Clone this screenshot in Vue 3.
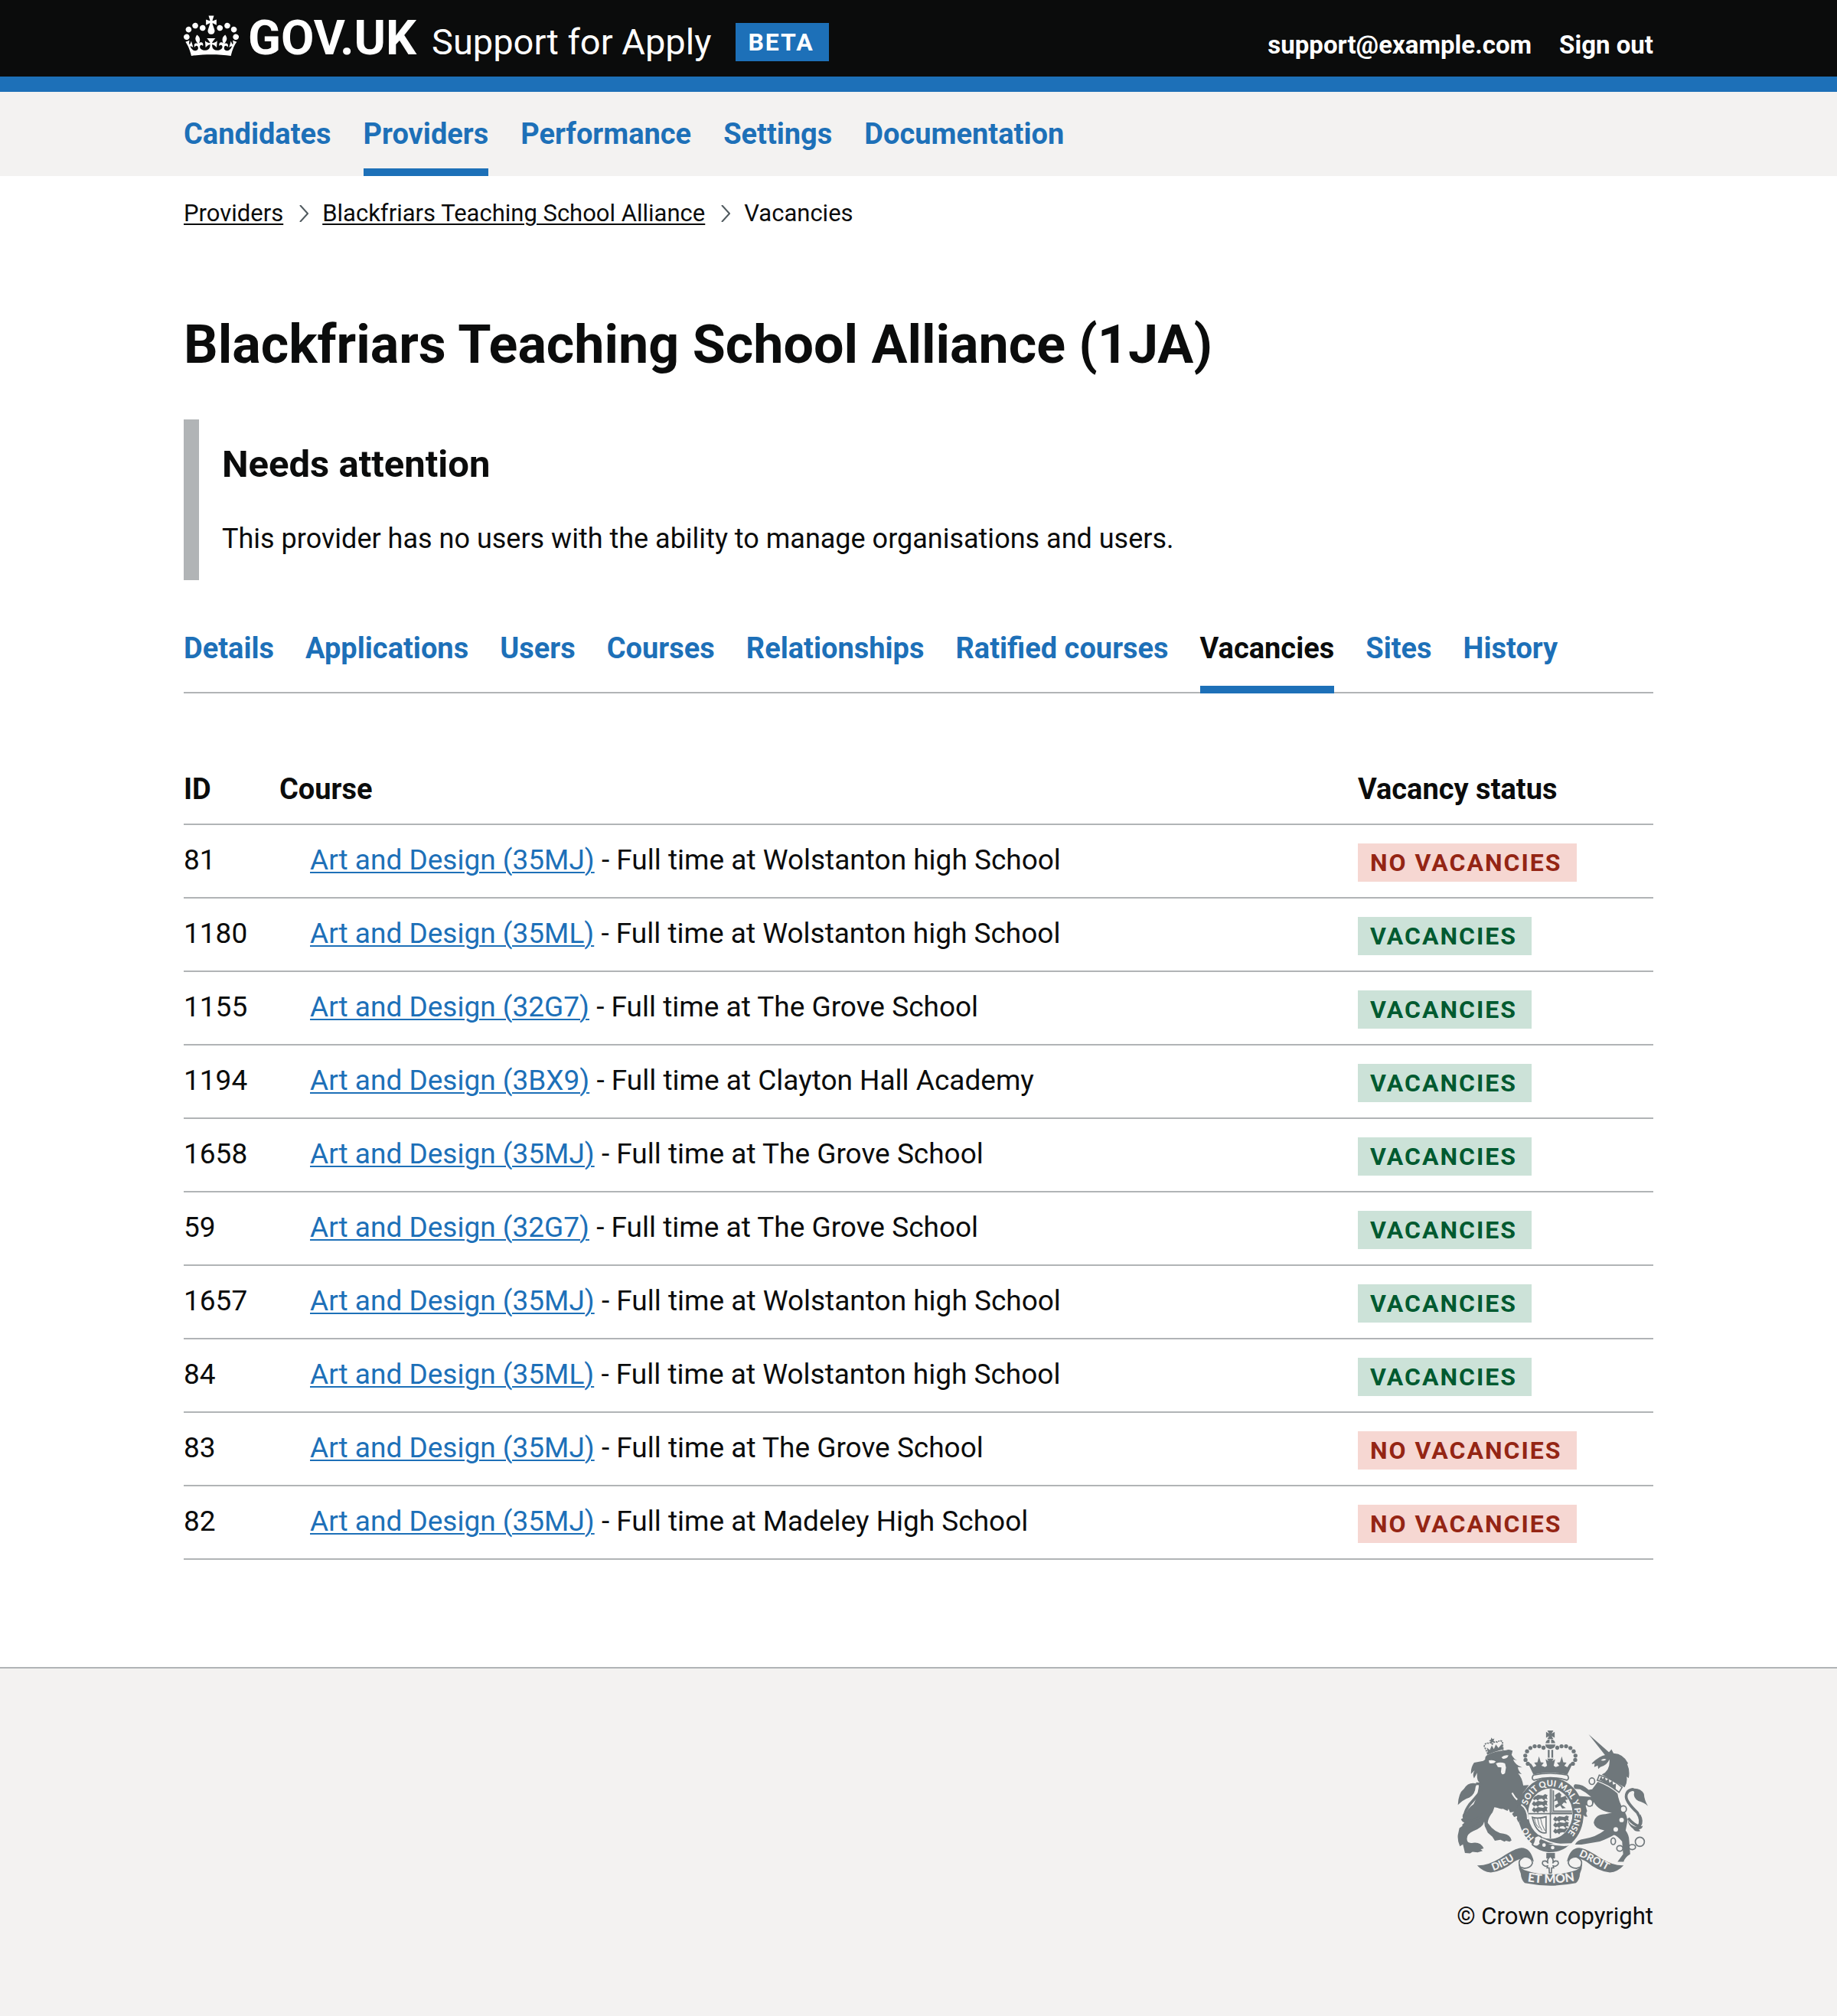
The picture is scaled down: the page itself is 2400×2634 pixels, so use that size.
<script setup>
const primaryNav = [
  { text: 'Candidates' },
  { text: 'Providers', current: true },
  { text: 'Performance' },
  { text: 'Settings' },
  { text: 'Documentation' }
]

const tabs = [
  { text: 'Details' },
  { text: 'Applications' },
  { text: 'Users' },
  { text: 'Courses' },
  { text: 'Relationships' },
  { text: 'Ratified courses' },
  { text: 'Vacancies', current: true },
  { text: 'Sites' },
  { text: 'History' }
]

const rows = [
  { id: 81, code: '35MJ', site: 'Wolstanton high School', open: false },
  { id: 1180, code: '35ML', site: 'Wolstanton high School', open: true },
  { id: 1155, code: '32G7', site: 'The Grove School', open: true },
  { id: 1194, code: '3BX9', site: 'Clayton Hall Academy', open: true },
  { id: 1658, code: '35MJ', site: 'The Grove School', open: true },
  { id: 59, code: '32G7', site: 'The Grove School', open: true },
  { id: 1657, code: '35MJ', site: 'Wolstanton high School', open: true },
  { id: 84, code: '35ML', site: 'Wolstanton high School', open: true },
  { id: 83, code: '35MJ', site: 'The Grove School', open: false },
  { id: 82, code: '35MJ', site: 'Madeley High School', open: false }
]

// Pearls along the left arch of the crown; the right arch mirrors them.
const pearls = [[410, 128], [393, 122], [375, 122], [358, 129], [345, 142], [338, 159], [339, 176], [348, 191]]

// Links of the unicorn's chain: centre, radii.
const chain = [[601, 260, 11, 13], [592, 345, 12, 14], [725, 370, 12, 13], [685, 497, 9, 13], [711, 525, 12, 11], [760, 520, 13, 10], [790, 499, 18, 18]]

// Lions passant: three to a quarter.
const passant = [[364, 326], [364, 350], [364, 374], [448, 410], [448, 434], [448, 458]]
</script>

<template>
  <div class="page">
    <header class="header">
      <div class="container header-inner">
        <a class="brand" href="#">
          <svg class="crown" viewBox="0 0 132 97" aria-hidden="true">
            <path d="M25 30.2c3.5 1.5 7.7-.2 9.1-3.7 1.5-3.6-.2-7.8-3.9-9.2-3.6-1.4-7.6.3-9.1 3.9-1.4 3.5.3 7.5 3.9 9zM9 39.5c3.6 1.5 7.8-.2 9.2-3.7 1.5-3.6-.2-7.8-3.9-9.1-3.6-1.5-7.6.2-9.1 3.8-1.4 3.5.3 7.5 3.8 9zM4.4 57.2c3.5 1.5 7.7-.2 9.1-3.8 1.5-3.6-.2-7.7-3.9-9.1-3.5-1.5-7.6.3-9.1 3.8-1.4 3.5.3 7.6 3.9 9.1zm38.3-21.4c3.5 1.5 7.7-.2 9.1-3.8 1.5-3.6-.2-7.7-3.9-9.1-3.6-1.5-7.6.3-9.1 3.8-1.3 3.6.4 7.7 3.9 9.1zm64.4-5.6c-3.6 1.5-7.8-.2-9.1-3.7-1.5-3.6.2-7.8 3.8-9.2 3.6-1.4 7.7.3 9.2 3.9 1.3 3.5-.4 7.5-3.9 9zm15.9 9.3c-3.6 1.5-7.7-.2-9.1-3.7-1.5-3.6.2-7.8 3.7-9.1 3.6-1.5 7.7.2 9.2 3.8 1.5 3.5-.3 7.5-3.8 9zm4.7 17.7c-3.6 1.5-7.8-.2-9.2-3.8-1.5-3.6.2-7.7 3.9-9.1 3.6-1.5 7.7.3 9.2 3.8 1.3 3.5-.4 7.6-3.9 9.1zM89.3 35.8c-3.6 1.5-7.8-.2-9.2-3.8-1.4-3.6.2-7.7 3.9-9.1 3.6-1.5 7.7.3 9.2 3.8 1.4 3.6-.3 7.7-3.9 9.1zM69.7 17.7l8.9 4.7V9.3l-8.9 2.8c-.2-.3-.5-.6-.9-.9L72.4 0H59.6l3.5 11.2c-.3.3-.6.5-.9.9l-8.8-2.8v13.1l8.8-4.7c.3.3.6.7.9.9l-5 15.4v.1c-.2.8-.4 1.6-.4 2.4 0 4.1 3.1 7.5 7 8.1h.2c.3 0 .7.1 1 .1.4 0 .7 0 1-.1h.2c4-.6 7.1-4.1 7.1-8.1 0-.8-.1-1.7-.4-2.4V34l-5.1-15.4c.4-.2.7-.6 1-.9zM66 92.8c16.9 0 32.8 1.1 47.1 3.2 4-16.9 8.9-26.7 14-33.5l-9.6-3.4c1 4.9 1.1 7.2 0 10.2-1.5-1.4-3-4.3-4.2-8.7L108.6 76c2.8-2 5-3.2 7.5-3.3-4.4 9.4-10 11.9-13.6 11.2-4.3-.8-6.3-4.6-5.6-7.9 1-4.7 5.7-5.9 8-.5 4.3-8.7-3-11.4-7.6-8.8 7.1-7.2 7.9-13.5 2.1-21.1-8 6.1-8.1 12.3-4.5 20.8-4.7-5.4-12.1-2.5-9.5 6.2 3.4-5.2 7.9-2 7.2 3.1-.6 4.3-6.4 7.8-13.5 7.2-10.3-.9-10.9-8-11.2-13.8 2.5-.5 7.1 1.8 11 7.3L80.2 60c-4.1 4.4-8 5.3-12.3 5.4 1.4-4.4 8-11.6 8-11.6H55.5s6.4 7.2 7.9 11.6c-4.2-.1-8-1-12.3-5.4l1.4 16.4c3.9-5.5 8.5-7.7 10.9-7.3-.3 5.8-.9 12.8-11.1 13.8-7.2.6-12.9-2.9-13.5-7.2-.7-5 3.8-8.3 7.1-3.1 2.7-8.7-4.6-11.6-9.4-6.2 3.7-8.5 3.6-14.7-4.6-20.8-5.8 7.6-5 13.9 2.2 21.1-4.7-2.6-11.9.1-7.7 8.8 2.3-5.5 7.1-4.2 8.1.5.7 3.3-1.3 7.1-5.7 7.9-3.5.7-9-1.8-13.5-11.2 2.5.1 4.7 1.3 7.5 3.3l-4.7-15.4c-1.2 4.4-2.7 7.2-4.3 8.7-1.1-3-.9-5.3 0-10.2l-9.5 3.4c5 6.9 9.9 16.7 14 33.5 14.8-2.1 30.8-3.2 47.7-3.2z" />
          </svg>
          <span class="logotype">GOV.UK</span>
          <span class="product">Support for Apply</span>
        </a>
        <strong class="tag tag-beta">BETA</strong>
        <nav class="account" aria-label="Account">
          <a href="#">support@example.com</a>
          <a href="#">Sign out</a>
        </nav>
      </div>
    </header>

    <nav class="primary" aria-label="Primary">
      <div class="container nav-list">
        <a
          v-for="item in primaryNav"
          :key="item.text"
          href="#"
          class="nav-link"
          :class="{ current: item.current }"
        >{{ item.text }}</a>
      </div>
    </nav>

    <div class="container">
      <nav aria-label="Breadcrumb">
        <ol class="breadcrumbs">
          <li><a href="#">Providers</a></li>
          <li>
            <svg class="chevron" viewBox="0 0 12 22" aria-hidden="true"><path d="M1 0l10 11-10 11" /></svg>
            <a href="#">Blackfriars Teaching School Alliance</a>
          </li>
          <li>
            <svg class="chevron" viewBox="0 0 12 22" aria-hidden="true"><path d="M1 0l10 11-10 11" /></svg>
            Vacancies
          </li>
        </ol>
      </nav>

      <main>
        <h1>Blackfriars Teaching School Alliance (1JA)</h1>

        <section class="inset">
          <h2>Needs attention</h2>
          <p>This provider has no users with the ability to manage organisations and users.</p>
        </section>

        <nav class="tabs nav-list" aria-label="Provider">
          <a
            v-for="tab in tabs"
            :key="tab.text"
            href="#"
            class="nav-link"
            :class="{ current: tab.current }"
          >{{ tab.text }}</a>
        </nav>

        <table>
          <thead>
            <tr>
              <th scope="col" class="col-id">ID</th>
              <th scope="col">Course</th>
              <th scope="col" class="col-status">Vacancy status</th>
            </tr>
          </thead>
          <tbody>
            <tr v-for="row in rows" :key="row.id">
              <td>{{ row.id }}</td>
              <td class="course"><a href="#">Art and Design ({{ row.code }})</a> - Full time at {{ row.site }}</td>
              <td class="status">
                <strong class="tag" :class="row.open ? 'tag-green' : 'tag-red'">{{ row.open ? 'VACANCIES' : 'NO VACANCIES' }}</strong>
              </td>
            </tr>
          </tbody>
        </table>
      </main>
    </div>

    <footer class="footer">
      <div class="container footer-inner">
        <a class="copyright" href="#">
          <svg class="arms" viewBox="70 58 755 614" aria-hidden="true">
            <defs>
              <path id="garter-path" d="M346 355A96 108 0 0 1 437 280A96 108 0 0 1 533 388A96 108 0 0 1 462 493" />
              <path id="garter-start" d="M374 484Q346 458 338 420" />
              <path id="motto-left" d="M212 613Q262 596 326 550" />
              <path id="motto-right" d="M549 555Q600 578 684 624" />
              <path id="motto-mid" d="M330 653Q437 672 550 650" />
              <clipPath id="shield"><ellipse cx="437" cy="388" rx="86" ry="98" /></clipPath>
            </defs>

            <!-- Royal crown -->
            <g>
              <path d="M425 60h24l-7 12 12-7v24l-12-7 7 12h-24l7-12-12 7V65l12 7z" />
              <path d="M418 110q2-14 16-15v15zM440 95q14 1 16 15h-16zM417 115h40q-2 16-20 18-18-2-20-18z" />
              <path d="M427 136h7v31h-7zM441 136h7v31h-7z" />
              <circle v-for="p in pearls" :key="'l' + p[0]" :cx="p[0]" :cy="p[1]" r="8" />
              <circle v-for="p in pearls" :key="'r' + p[0]" :cx="874 - p[0]" :cy="p[1]" r="8" />
              <path d="M346 183l16 9 8 13 12-6-9-12 13-2 6-23 7 23 12 2-9 12 14 5 8-5-6-26 12 8-6-10h26l-6 10 12-8-6 26 8 5 14-5-9-12 12-2 7-23 6 23 13 2-9 12 12 6 8-13 16-9-24 51q-67-16-134 0z" />
              <path class="line" d="M370 236q67-14 134 0 10 14-2 20-65-20-130 0-12-6-2-20z" />
            </g>

            <!-- Lion -->
            <g>
              <path class="line" d="M190 152l-14-30q4-14 16-12 8-6 16 4 10-14 20-8 10-10 20-2l2 34" stroke-dasharray="7 3" />
              <path d="M190 145l-4-18 12 10 8-18 8 14 8-18 10 14 14-16 4 18-58 20zM204 88l5 6 7-2-3 8 4 7-9-1-5 7-2-9-6-4 7-4zM187 150q32-14 65-22v6q-34 8-64 22z" />
              <path d="M172 180l8-6q-2-10 6-16 32-18 76-20 12-6 26 2l-4 16q10 18 22 22l-16-4q8 22 36 32l-18-2q4 18 16 28l-14-3q16 18 20 48l22-2-14 20q-22 24-20 46 26 12 34 34l2 36-18 10-8 6-10-10-8 4-6-14 4-10-14 4-8-12 8-8-16 2-6-14-4 8q-12-4-18-8-10 2-22-4-8-2-12-2-2 6-4 12-2 8-8 14-14 20-14 36 28 40 62 42 26 4 32 26l-8 6-14-4-6 4-16-8-22 4-10-16-18-16-12-26-2-18q-4 22-44 38-26 12-24 32 0 18 24 14 30-4 42 22l-12 4 8 6-20 6-20-2-10 6-20-2-8-34-12 8q-10-20-8-44l6-28q26-14 24-48 4-28 32-46 20-40 22-88-10-6-8-36l-12 22q-8-16 2-32l-14 14q-2-24 12-44z" />
              <path class="bg" d="M194 178q18-4 28 4-10 12-26 6zM244 166q12-12 28-8-6 14-22 14zM222 190q18-8 36 0l4 16-4 22q-12 12-16-4l2-18-14-2z" />
              <path class="bg-line" d="M286 306q10 20 26 32" />
              <path class="tail" d="M178 384q-46 46-72 30-18-20 12-62 34-38 46-56 12-28-20-26" />
              <path d="M148 270q-34-10-52 20-22 16-24 64 18-20 46-30 22-12 24-42zM104 382q-18 4-12 24l-8 4q6 12 14 14l-10 8q16 14 40 8 24-10 36-34-28 14-46 10-18-12-14-34z" />
            </g>

            <!-- Unicorn -->
            <g>
              <path d="M588 75l84 74-16 12z" />
              <path d="M600 190q30-30 56-34l14-12 8-10 8 16q40 2 58 40l-4 2q12 26 6 56l-8-6q4 24-8 42l-90-50q34-16 30-60-10 24-36 30l-8 8-2-14-14 6 2-14-10 2z" />
              <path class="bg" d="M636 178q10-10 22-4-8 8-22 4z" />
              <path class="line" d="M630 236q50 14 90 48l-12 20q-40-34-86-48z" />
              <path d="M630 254l8-14 5 12 9-10 4 16 11-8 3 16 12-8 2 16 12-4-2 26q-30-26-64-42z" />
              <path d="M624 262q50 20 78 46 4 30 24 66 18 26 14 50l-6 30q14 20 14 40l4 54q-20 12-26 30h-24l22-30-4-50q-20-24-32-26-16 10-56 26l-72 12h-26q10-20 34-22 50-8 82-34-38-6-42-30 6-34 46-34l26-6q-50-4-72-42l-6 18q-6-12-26-4l6 22q-8 10 2 22h-10l-18-18q-2-20-8-28-16 4-26-6l6-12 20-18 50 4q-20-18-44-30l-20-2q-10-10 0-18 30-2 54 22l14-2z" />
              <circle class="bg" cx="718" cy="413" r="9" />
              <circle class="bg" cx="695" cy="450" r="9" />
              <path class="tail" d="M744 406q20 24 42 32 14-22-6-54-42-40-44-62 0-28 30-30" />
              <path d="M756 290q36-6 50 20 2 26 16 48-14-14-38-20-22-14-16-36zM742 412q12 30 42 28l8-50q16 30 2 48l8-2q-4 14-16 14l6 6q-20 6-28-8-20-14-22-36z" />
              <ellipse v-for="c in chain" :key="c[0]" class="link bg" :cx="c[0]" :cy="c[1]" :rx="c[2]" :ry="c[3]" />
            </g>

            <!-- Garter and shield -->
            <g>
              <path d="M437 246A132 146 0 0 0 348 284L300 340 330 410 312 420Q330 480 368 510L520 505Q568 460 568 388A131 143 0 0 0 437 246z" />
              <ellipse class="shield" cx="437" cy="388" rx="90" ry="102" />
              <g clip-path="url(#shield)">
                <path class="line" d="M437 280v216M345 388h184M449 296v82h80" />
                <path class="line thin" d="M443 290v94h84" />
                <path
                  v-for="l in passant"
                  :key="l.join()"
                  :d="`M${l[0]} ${l[1]}l8-12 6 6 10-6 20 3 8-6 10 4-3 8 3 9-9-3-4 8-9-8-12 2-4 7-7-7-8 4z`"
                />
                <path d="M462 310l10-6 8 8-2 12 14-4 12-10-4 14 8 8-12 2 6 14-12-4-8 10 16 12-14 2-8-12-18 10-4-10 14-8-4-12-14 4 8-14-4-10z" />
                <path class="line" d="M366 402q20 8 54-2v64q-40 4-54-62z" />
                <path class="line thin" d="M374 404q2 30 20 40M386 406q4 30 18 48M398 406q4 26 18 50" />
              </g>
              <path d="M310 352q32 10 38 52l-18 14-20-8-12-30z" />
              <path class="bg-line" d="M322 352q26 18 26 58" />
              <path d="M372 480q40 34 120 36l18-4q-30 30-82 28-40-6-64-28z" />
              <path class="buckle" d="M374 482q22-16 32 6-16 6-8 18-16 20-32 4 10-14 8-28z" />
              <path class="bg-line" d="M402 486q50 26 104 26" />
              <circle class="bg" cx="412" cy="512" r="7" />
              <circle class="bg" cx="446" cy="522" r="7" />
              <text class="garter"><textPath href="#garter-path">SOIT QUI MAL Y PENSE</textPath></text>
              <text class="garter"><textPath href="#garter-start">HO</textPath></text>
            </g>

            <!-- Plume badge under the shield -->
            <g>
              <path d="M421 543h34v22h-34z" />
              <path class="link bg" d="M437 556q16 14 9 28 6-14 20-8 8 12-10 20l-8-2 2 8h-8l-1 20h-8l-1-20h-8l2-8-8 2q-18-8-10-20 14-6 20 8-7-14 9-28z" />
            </g>

            <!-- Motto scroll -->
            <g>
              <path d="M148 592q40 2 90-28 50-34 76-40 44-8 58 54-22-20-52-12-20 8-26 12-44 38-92 42-30-2-54-28z" />
              <path d="M726 592q-40 2-90-28-50-34-76-40-44-8-58 54 22-20 52-12 20 8 26 12 44 38 92 42 30-2 54-28z" />
              <path class="fold" d="M318 598q-14-28 18-40 32 4 30 26-6 18-32 20zM556 598q14-28-18-40-32 4-30 26 6 18 32 20z" />
              <path d="M312 578q2 24 22 32 103 36 206 0 20-8 22-32 2 24-8 46-2 26-16 38-101 20-202 0-14-12-16-38-10-22-8-46z" />
              <text class="motto"><textPath href="#motto-left">DIEU</textPath></text>
              <text class="motto"><textPath href="#motto-right">DROIT</textPath></text>
              <text class="motto motto-large"><textPath href="#motto-mid" startOffset="50%" text-anchor="middle">ET MON</textPath></text>
            </g>
          </svg>
          © Crown copyright
        </a>
      </div>
    </footer>
  </div>
</template>

<style>
body {
  margin: 0;
  background: #fff;
}
</style>

<style scoped>
.page {
  display: flex;
  flex-direction: column;
  min-height: 100vh;
  font-family: Roboto, "Liberation Sans", sans-serif;
  font-size: 37px;
  line-height: 50px;
  color: #0b0c0c;
}

a {
  color: #1d70b8;
  text-decoration-thickness: 2px;
  text-underline-offset: 3px;
}

.container {
  box-sizing: border-box;
  width: 80%;
  min-width: 1800px;
  max-width: 1920px;
  margin: 0 auto;
}

.header {
  background: #0b0c0c;
  border-bottom: 20px solid #1d70b8;
}

.header-inner {
  display: flex;
  align-items: flex-start;
  padding: 20px 0;
}

.header a {
  color: #fff;
  text-decoration: none;
}

.brand {
  display: flex;
  align-items: baseline;
  line-height: 60px;
}

.crown {
  align-self: flex-start;
  width: 72px;
  height: 54px;
  margin-right: 12px;
  fill: #fff;
}

.logotype {
  height: 60px;
  margin-right: 20px;
  font-size: 63px;
  font-weight: 700;
}

.product {
  height: 50px;
  font-size: 47px;
}

.tag {
  display: inline-block;
  padding: 0 19px 0 16px;
  font-size: 32px;
  font-weight: 700;
  line-height: 50px;
  letter-spacing: 2px;
  vertical-align: top;
  white-space: nowrap;
}

.tag-beta {
  margin: 10px 0 0 32px;
  color: #fff;
  background: #1d70b8;
}

.tag-green {
  color: #005a30;
  background: #cce2d8;
}

.tag-red {
  color: #942514;
  background: #f6d7d2;
}

.account {
  display: flex;
  gap: 36px;
  margin: 10px 0 0 auto;
  font-size: 33px;
  font-weight: 700;
  line-height: 58px;
  height: 50px;
}

.primary {
  padding-top: 30px;
  background: #f3f2f1;
}

.nav-list {
  display: flex;
  gap: 42px;
}

.nav-link {
  border-bottom: 10px solid transparent;
  font-size: 38px;
  font-weight: 700;
  text-decoration: none;
}

.primary .nav-link {
  padding-bottom: 20px;
}

.nav-link.current {
  border-color: #1d70b8;
}

.breadcrumbs {
  display: flex;
  margin: 0;
  padding: 29px 0 0;
  font-size: 31px;
  line-height: 40px;
  list-style: none;
}

.breadcrumbs li {
  display: flex;
  align-items: center;
}

.breadcrumbs a {
  color: inherit;
}

.chevron {
  width: 12px;
  height: 22px;
  margin: 0 18px 0 21px;
  fill: none;
  stroke: #505a5f;
  stroke-width: 2;
}

h1 {
  margin: 111px 0 58px;
  font-size: 70px;
  line-height: 80px;
}

.inset {
  padding: 29px 30px;
  border-left: 20px solid #b1b4b6;
}

h2 {
  margin: 0 0 42px;
  font-size: 49px;
  line-height: 60px;
}

p {
  margin: 0;
  font-size: 36px;
}

.tabs {
  gap: 41px;
  margin: 64px 0 80px;
  border-bottom: 2px solid #b1b4b6;
}

.tabs .nav-link {
  margin-bottom: -2px;
  padding-bottom: 24px;
}

.tabs .current {
  color: #0b0c0c;
}

table {
  width: 100%;
  border-spacing: 0;
  table-layout: fixed;
}

th,
td {
  padding: 21px 0 23px;
  border-bottom: 2px solid #b1b4b6;
  text-align: left;
  vertical-align: top;
}

th {
  padding: 20px 0;
  font-size: 38px;
}

.col-id {
  width: 125px;
}

.col-status {
  width: 386px;
}

.course {
  padding-left: 40px;
}

.status {
  padding: 24px 0 20px;
}

.footer {
  flex: 1;
  margin-top: 140px;
  padding: 80px 0 110px;
  background: #f3f2f1;
  border-top: 2px solid #b1b4b6;
}

.footer-inner {
  display: flex;
  justify-content: flex-end;
}

.copyright {
  display: flex;
  flex-direction: column;
  align-items: flex-end;
  gap: 20px;
  color: #0b0c0c;
  font-size: 31px;
  line-height: 40px;
  text-decoration: none;
}

.arms {
  width: 250px;
  height: 204px;
  margin-right: 6px;
  fill: #6f777b;
}

.arms .bg {
  fill: #f3f2f1;
}

.arms .line {
  fill: none;
  stroke: #6f777b;
  stroke-width: 5;
}

.arms .thin {
  stroke-width: 3;
}

.arms .tail {
  fill: none;
  stroke: #6f777b;
  stroke-width: 11;
}

.arms .bg-line {
  fill: none;
  stroke: #f3f2f1;
  stroke-width: 6;
}

.arms .link {
  stroke: #6f777b;
  stroke-width: 5;
}

.arms .fold,
.arms .buckle,
.arms .shield {
  fill: #f3f2f1;
  stroke: #6f777b;
  stroke-width: 5;
}

.arms text {
  fill: #f3f2f1;
  font-family: Lato, "Liberation Sans", sans-serif;
  font-weight: 900;
}

.arms .garter {
  font-size: 34px;
}

.arms .motto {
  font-size: 40px;
}

.arms .motto-large {
  font-size: 48px;
}
</style>
